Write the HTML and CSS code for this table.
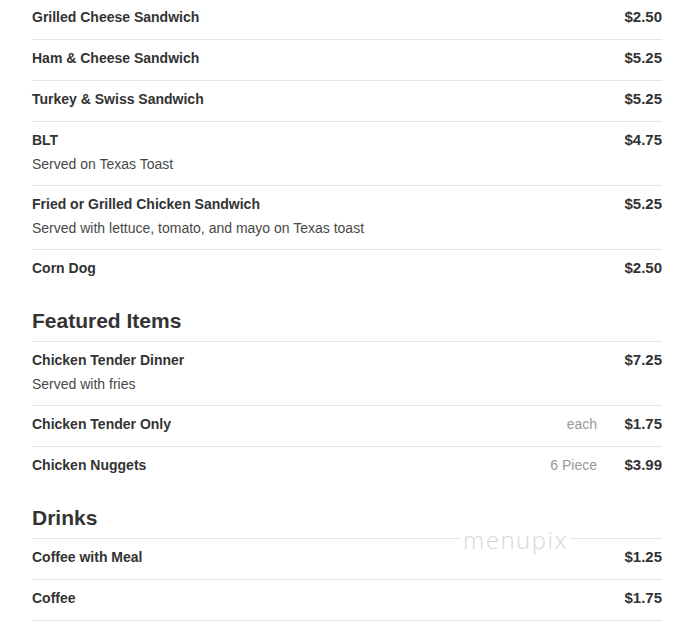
FILE: index.html
```html
<!DOCTYPE html>
<html>
<head>
<meta charset="utf-8">
<link rel="stylesheet" href="styles.css">
</head>
<body>
<div class="menu">
  <section class="section first">
    <div class="item">
      <div class="info"><div class="name">Grilled Cheese Sandwich</div></div>
      <div class="price">$2.50</div>
    </div>
    <div class="item">
      <div class="info"><div class="name">Ham &amp; Cheese Sandwich</div></div>
      <div class="price">$5.25</div>
    </div>
    <div class="item">
      <div class="info"><div class="name">Turkey &amp; Swiss Sandwich</div></div>
      <div class="price">$5.25</div>
    </div>
    <div class="item">
      <div class="info"><div class="name">BLT</div><div class="desc">Served on Texas Toast</div></div>
      <div class="price">$4.75</div>
    </div>
    <div class="item">
      <div class="info"><div class="name">Fried or Grilled Chicken Sandwich</div><div class="desc">Served with lettuce, tomato, and mayo on Texas toast</div></div>
      <div class="price">$5.25</div>
    </div>
    <div class="item">
      <div class="info"><div class="name">Corn Dog</div></div>
      <div class="price">$2.50</div>
    </div>
  </section>
  <section class="section">
    <h2 class="heading">Featured Items</h2>
    <div class="item">
      <div class="info"><div class="name">Chicken Tender Dinner</div><div class="desc">Served with fries</div></div>
      <div class="price">$7.25</div>
    </div>
    <div class="item">
      <div class="info"><div class="name">Chicken Tender Only</div></div>
      <div class="size">each</div>
      <div class="price">$1.75</div>
    </div>
    <div class="item">
      <div class="info"><div class="name">Chicken Nuggets</div></div>
      <div class="size">6 Piece</div>
      <div class="price">$3.99</div>
    </div>
  </section>
  <section class="section">
    <h2 class="heading">Drinks</h2>
    <div class="item">
      <div class="info"><div class="name">Coffee with Meal</div></div>
      <div class="price">$1.25</div>
    </div>
    <div class="item">
      <div class="info"><div class="name">Coffee</div></div>
      <div class="price">$1.75</div>
    </div>
  </section>
</div>
<div class="watermark">menupix</div>
</body>
</html>
```
FILE: styles.css
```css
html, body {
  margin: 0;
  padding: 0;
  background: #fff;
  overflow: hidden;
}
body {
  font-family: "Liberation Sans", Arial, sans-serif;
  color: #333;
  position: relative;
  height: 621px;
}
.menu {
  padding: 0 32px;
  margin-top: -1px;
}
.section {
  display: flex;
  flex-direction: column;
}
.heading {
  margin: 18px 0 0 0;
  font-size: 21px;
  line-height: 25px;
  font-weight: bold;
  color: #333;
  padding-bottom: 8px;
  border-bottom: 1px solid #e5e5e5;
}
.item {
  display: flex;
  align-items: flex-start;
  padding: 8px 0 12px 0;
  border-bottom: 1px solid #e5e5e5;
}
.section .item:last-child {
  border-bottom: none;
}
.section:last-child .item:last-child {
  border-bottom: 1px solid #e5e5e5;
}
.info {
  flex: 1;
  display: flex;
  flex-direction: column;
}
.name {
  font-size: 14px;
  line-height: 20px;
  font-weight: bold;
  color: #333;
}
.desc {
  font-size: 14px;
  line-height: 18px;
  margin-top: 5px;
  color: #484848;
}
.size {
  font-size: 14px;
  line-height: 20px;
  color: #999;
}
.price {
  min-width: 65px;
  text-align: right;
  font-size: 15px;
  line-height: 20px;
  font-weight: bold;
  color: #333;
}
.watermark {
  position: absolute;
  left: 461px;
  top: 526px;
  padding: 0 2px;
  background: #fff;
  font-family: "Open Sans", "Lato", sans-serif;
  font-weight: 300;
  font-size: 24px;
  line-height: 28px;
  letter-spacing: 1.5px;
  color: #d8d8d8;
}
```
